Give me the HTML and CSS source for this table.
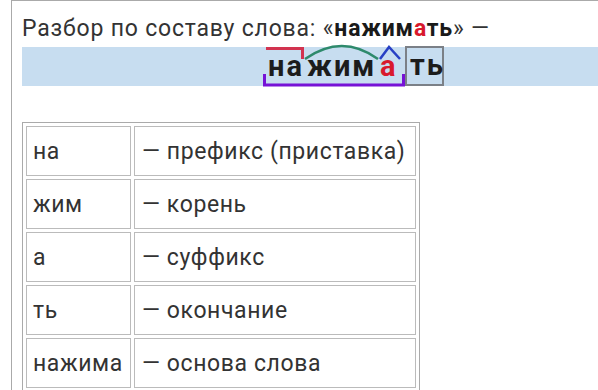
FILE: index.html
```html
<!DOCTYPE html>
<html lang="ru">
<head>
<meta charset="utf-8">
<link rel="stylesheet" href="styles.css">
</head>
<body>
<div class="page">
  <p class="title">Разбор по составу слова: «<b>нажим<span class="red">а</span>ть</b>» —</p>
  <div class="band">
    <div class="word">
      <span class="m prefix">на</span>
      <span class="m root">жим</span>
      <span class="m suffix">а</span>
      <span class="m ending">ть</span>
      <svg class="marks" width="220" height="50" viewBox="0 0 220 50">
        <path d="M3 1.5 H39.5 V12" fill="none" stroke="#d2334f" stroke-width="3"/>
        <path d="M42 12 Q79 -14 115 12" fill="none" stroke="#2e8a6c" stroke-width="2.5"/>
        <path d="M117 12 L126 0 L137 12" fill="none" stroke="#2840c4" stroke-width="2.5"/>
        <path d="M1.5 27 V38 H140.5 V27" fill="none" stroke="#7612d6" stroke-width="3"/>
      </svg>
    </div>
  </div>
  <table class="parts">
    <tr><td class="c1">на</td><td class="c2">— префикс (приставка)</td></tr>
    <tr><td class="c1">жим</td><td class="c2">— корень</td></tr>
    <tr><td class="c1">а</td><td class="c2">— суффикс</td></tr>
    <tr><td class="c1">ть</td><td class="c2">— окончание</td></tr>
    <tr><td class="c1">нажима</td><td class="c2">— основа слова</td></tr>
  </table>
</div>
</body>
</html>
```
FILE: styles.css
```css
html, body {
  margin: 0;
  padding: 0;
  background: #fff;
  overflow: hidden;
}
body {
  font-family: Roboto, "Noto Sans", sans-serif;
  color: #333;
}
.page {
  margin-left: 11px;
  width: 700px;
  min-height: 400px;
  border-top: 1px solid #aaa;
  border-left: 1px solid #aaa;
  padding: 15px 0 0 10px;
}
.title {
  margin: 0;
  font-size: 23px;
  letter-spacing: 0.8px;
  line-height: 26px;
  white-space: nowrap;
}
.title b {
  color: #1a1a1a;
}
.red {
  color: #d8192d;
}
.band {
  margin-top: 5px;
  height: 39px;
  background: #c7ddf0;
  padding-left: 241px;
  display: flex;
}
.word {
  position: relative;
  display: flex;
  align-items: stretch;
  font-weight: 700;
  font-size: 29px;
  letter-spacing: 2px;
  line-height: 39px;
  color: #1c1c1c;
}
.m {
  display: block;
  white-space: nowrap;
}
.prefix {
  margin-left: 5px;
  width: 39px;
}
.root {
  width: 73px;
}
.suffix {
  width: 25px;
  color: #d8192d;
}
.ending {
  width: 39px;
  box-sizing: border-box;
  margin-top: -1px;
  padding-left: 3px;
  border: 2px solid #7b8087;
  line-height: 35px;
}
.marks {
  position: absolute;
  left: 0;
  top: 0;
  overflow: visible;
}
.parts {
  margin-top: 36px;
  border: 1px solid #aaa;
  border-spacing: 3px;
  font-size: 23px;
  letter-spacing: 0.6px;
  color: #333;
}
.parts td {
  border: 1px solid #bbb;
  height: 48px;
  padding: 0 0 0 6px;
  vertical-align: middle;
  white-space: nowrap;
}
.parts .c1 {
  width: 97px;
}
.parts .c2 {
  width: 273px;
  padding-left: 7px;
}
```
